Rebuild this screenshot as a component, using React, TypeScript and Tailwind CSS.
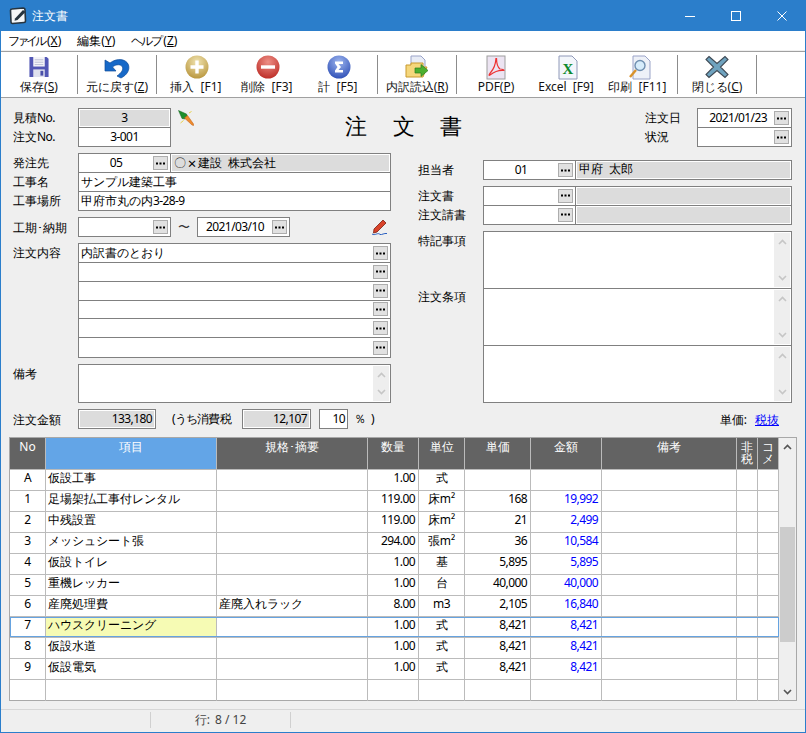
import React from "react";

const FONT = "font-['Noto_Sans_CJK_JP','Noto_Sans',sans-serif]";

function Dots() {
  return (
    <span className="flex h-[14px] w-[15px] shrink-0 items-center justify-center border border-[#adadad] bg-[#e1e1e1]">
      <svg width="9" height="3" viewBox="0 0 9 3"><rect width="2" height="2" y="0.5" fill="#000" /><rect x="3.5" y="0.5" width="2" height="2" fill="#000" /><rect x="7" y="0.5" width="2" height="2" fill="#000" /></svg>
    </span>
  );
}

function Num({ children, className = "" }: { children: React.ReactNode; className?: string }) {
  return <span className={`tracking-[-0.6px] ${className}`}>{children}</span>;
}

function Label({ children, className = "" }: { children: React.ReactNode; className?: string }) {
  return <div className={`w-[65px] shrink-0 text-[12px] leading-[19px] text-black ${className}`}>{children}</div>;
}

function GreyFill({ children, className = "" }: { children?: React.ReactNode; className?: string }) {
  return <div className={`m-[1px] flex min-w-0 flex-1 bg-[#dcdcdc] text-[12px] ${className}`}>{children}</div>;
}

function VScroll({ cls = "" }: { cls?: string }) {
  return (
    <div className={`my-[1px] mr-[1px] flex w-[16px] shrink-0 flex-col items-center justify-between bg-[#eeeeee] py-[6px] ${cls}`}>
      <svg width="9" height="6" viewBox="0 0 9 6"><path d="M1 5 L4.5 1.5 L8 5" fill="none" stroke="#c6c6c6" strokeWidth="1.6" /></svg>
      <svg width="9" height="6" viewBox="0 0 9 6"><path d="M1 1 L4.5 4.5 L8 1" fill="none" stroke="#c6c6c6" strokeWidth="1.6" /></svg>
    </div>
  );
}

function Toolbtn({ w, label, children }: { w: string; label: React.ReactNode; children: React.ReactNode }) {
  return (
    <div className={`flex ${w} shrink-0 flex-col items-center`}>
      <div className="flex h-[30px] w-[28px] items-center justify-center">{children}</div>
      <div className="mt-[-3px] whitespace-nowrap text-[12px] leading-[16px] text-[#111]">{label}</div>
    </div>
  );
}

function Sep() {
  return <div className="my-[3px] w-[1px] shrink-0 bg-[#8c8c8c]" />;
}

function Ball({ id, a, b, children }: { id: string; a: string; b: string; children: React.ReactNode }) {
  return (
    <svg width="24" height="24" viewBox="0 0 24 24">
      <defs>
        <radialGradient id={id} cx="50%" cy="28%" r="75%">
          <stop offset="0%" stopColor={a} />
          <stop offset="100%" stopColor={b} />
        </radialGradient>
      </defs>
      <circle cx="12" cy="12" r="11.5" fill={`url(#${id})`} />
      {children}
    </svg>
  );
}

const U = ({ children }: { children: React.ReactNode }) => <span className="underline">{children}</span>;

const cols = [
  "w-[36px]", "w-[171px]", "w-[151px]", "w-[51px]", "w-[46px]", "w-[66px]", "w-[71px]", "w-[135px]", "w-[21px]", "w-[21px]",
];

type Row = { no: string; name: string; spec?: string; qty: string; unit: string; price?: string; amt?: string };
const rows: Row[] = [
  { no: "A", name: "仮設工事", qty: "1.00", unit: "式" },
  { no: "1", name: "足場架払工事付レンタル", qty: "119.00", unit: "床m²", price: "168", amt: "19,992" },
  { no: "2", name: "中残設置", qty: "119.00", unit: "床m²", price: "21", amt: "2,499" },
  { no: "3", name: "メッシュシート張", qty: "294.00", unit: "張m²", price: "36", amt: "10,584" },
  { no: "4", name: "仮設トイレ", qty: "1.00", unit: "基", price: "5,895", amt: "5,895" },
  { no: "5", name: "重機レッカー", qty: "1.00", unit: "台", price: "40,000", amt: "40,000" },
  { no: "6", name: "産廃処理費", spec: "産廃入れラック", qty: "8.00", unit: "m3", price: "2,105", amt: "16,840" },
  { no: "7", name: "ハウスクリーニング", qty: "1.00", unit: "式", price: "8,421", amt: "8,421" },
  { no: "8", name: "仮設水道", qty: "1.00", unit: "式", price: "8,421", amt: "8,421" },
  { no: "9", name: "仮設電気", qty: "1.00", unit: "式", price: "8,421", amt: "8,421" },
  { no: "", name: "", qty: "", unit: "" },
];

const heads = ["No", "項目", "規格･摘要", "数量", "単位", "単価", "金額", "備考", "非税", "コメ"];

export default function App() {
  return (
    <div className={`flex h-[733px] w-[806px] flex-col overflow-hidden border-x border-b border-[#2b7ecb] bg-[#efefef] text-black ${FONT}`}>
      {/* title bar */}
      <div className="flex h-[31px] shrink-0 items-center bg-[#2b7ecb] pl-[8px] text-white">
        <svg width="19" height="18" viewBox="0 0 19 18">
          <path d="M1.5 3.5 Q1.5 2 3 2 L14 1 Q16 1 16 3 L16.5 14 Q16.5 15.5 15 15.5 L3.5 16.5 Q2 16.5 2 15 Z" fill="#f4f6f8" stroke="#26343f" strokeWidth="1.6" />
          <path d="M6 11.5 L14 3 L16.5 5 L8.5 13 L5.5 13.8 Z" fill="#26343f" />
        </svg>
        <span className="ml-[4px] text-[12px]">注文書</span>
        <div className="flex-1" />
        <svg width="12" height="12" viewBox="0 0 12 12" className="mr-[34px]"><path d="M1 6.5 H11" stroke="#fff" /></svg>
        <svg width="12" height="12" viewBox="0 0 12 12" className="mr-[34px]"><rect x="1.5" y="1.5" width="9" height="9" fill="none" stroke="#fff" /></svg>
        <svg width="12" height="12" viewBox="0 0 12 12" className="mr-[17px]"><path d="M1.5 1.5 L10.5 10.5 M10.5 1.5 L1.5 10.5" stroke="#fff" /></svg>
      </div>
      {/* menu */}
      <div className="flex h-[19px] shrink-0 items-center gap-[16px] bg-white pl-[7px] text-[12px]">
        <span><span className="tracking-[-3px]">ファイル</span><span className="ml-[3px]">(<U>X</U>)</span></span>
        <span>編集(<U>Y</U>)</span>
        <span><span className="tracking-[-2px]">ヘルプ</span><span className="ml-[2px]">(<U>Z</U>)</span></span>
      </div>
      <div className="h-[1px] shrink-0 bg-[#efefef]" />
      {/* toolbar */}
      <div className="flex h-[47px] shrink-0 border-y border-[#a0a0a0] bg-white">
        <Toolbtn w="w-[76px]" label={<>保存(<U>S</U>)</>}>
          <svg width="22" height="22" viewBox="0 0 22 23">
            <path d="M1 1 H19 L21 3 V22 H1 Z" fill="#5257b5" />
            <rect x="5" y="1" width="12" height="10" fill="#f4f4f8" />
            <path d="M6.5 4 H15.5 M6.5 6.5 H15.5 M6.5 9 H15.5" stroke="#b9bcd4" />
            <rect x="5" y="14" width="12" height="8" fill="#dfe1ee" />
            <rect x="12.5" y="15.5" width="3" height="5" fill="#4a4fa8" />
          </svg>
        </Toolbtn>
        <Sep />
        <Toolbtn w="w-[78px]" label={<>元に戻す(<U>Z</U>)</>}>
          <svg width="26" height="23" viewBox="0 0 26 23">
            <path d="M1 4 L1 15 L12 15 L8.5 11 C12 8 17 8 18.5 11 C19.5 14 17 17 13 20 L17 22 C23 19 26 14 24.5 9 C22.5 3 13 1.5 6 7 Z" fill="#1769c8" stroke="#0e4a98" strokeWidth="0.7" />
          </svg>
        </Toolbtn>
        <Sep />
        <div className="w-[4px] shrink-0" />
        <Toolbtn w="w-[71px]" label={<span className="mr-[2px] block">挿入<span className="ml-[7px]">[F1]</span></span>}>
          <Ball id="g1" a="#f0e3b0" b="#b8953c"><path d="M12 5.5 V18.5 M5.5 12 H18.5" stroke="#fff" strokeWidth="3.4" /></Ball>
        </Toolbtn>
        <Toolbtn w="w-[71px]" label={<span className="mr-[2px] block">削除<span className="ml-[7px]">[F3]</span></span>}>
          <Ball id="g2" a="#ee8f86" b="#bc2b25"><path d="M5 12 H19" stroke="#fff" strokeWidth="3.4" /></Ball>
        </Toolbtn>
        <Toolbtn w="w-[71px]" label={<span className="mr-[2px] block">計<span className="ml-[7px]">[F5]</span></span>}>
          <Ball id="g3" a="#9db5ee" b="#2e4fb6"><path d="M8 6.5 H16 V9 L11.5 9 L14 12 L11.5 15 L16 15 V17.5 H8 V15.5 L10.5 12 L8 8.5 Z" fill="#fff" /></Ball>
        </Toolbtn>
        <div className="w-[3px] shrink-0" />
        <Sep />
        <Toolbtn w="w-[78px]" label={<>内訳読込(<U>R</U>)</>}>
          <svg width="24" height="25" viewBox="0 0 24 25">
            <path d="M6 1 H16 L20 5 V14 H6 Z" fill="#e8ecf6" stroke="#9aa3c8" />
            <path d="M1 10 H6 V8 H18 V12 L22 12 L18 22 H1 Z" fill="#f5d77c" stroke="#c99a2e" />
            <path d="M10 13 H16 V9.5 L23 15.5 L16 21.5 V18 H10 Z" fill="#4caf2f" stroke="#2b7c1e" strokeWidth="0.7" />
          </svg>
        </Toolbtn>
        <Sep />
        <div className="w-[3px] shrink-0" />
        <Toolbtn w="w-[72px]" label={<>PDF(<U>P</U>)</>}>
          <svg width="20" height="25" viewBox="0 0 20 25">
            <rect x="1" y="1" width="18" height="23" fill="#ece4f2" stroke="#9e9e9e" />
            <path d="M10 3 C9.5 7 10 11 5 17 C3 19.5 2.5 21 4 20 C8 17 12 15 17.5 15.5 C19 15.7 17 14 14 14 C11.5 12 10.5 8 10.5 3" fill="none" stroke="#ee3232" strokeWidth="1.2" />
          </svg>
        </Toolbtn>
        <Toolbtn w="w-[72px]" label={<span className="mr-[4px] block">Excel<span className="ml-[6px]">[F9]</span></span>}>
          <svg width="20" height="25" viewBox="0 0 20 25">
            <path d="M1 1 H14 L19 6 V24 H1 Z" fill="#f3f6fb" stroke="#8f98b8" />
            <text x="10" y="19" textAnchor="middle" fontFamily="Liberation Serif" fontWeight="bold" fontSize="15" fill="#0c8a2c">X</text>
          </svg>
        </Toolbtn>
        <Toolbtn w="w-[72px]" label={<span className="mr-[6px] block">印刷<span className="ml-[7px]">[F11]</span></span>}>
          <svg width="24" height="25" viewBox="0 0 24 25">
            <path d="M5 1 H17 L22 6 V24 H5 Z" fill="#eef1f8" stroke="#9aa3c8" />
            <path d="M8 15 L2 22" stroke="#d9922a" strokeWidth="2.4" />
            <circle cx="12" cy="10.5" r="5" fill="#d6ecfb" stroke="#6f8fb0" strokeWidth="1.4" />
          </svg>
        </Toolbtn>
        <div className="w-[1px] shrink-0" />
        <Sep />
        <Toolbtn w="w-[78px]" label={<>閉じる(<U>C</U>)</>}>
          <svg width="24" height="24" viewBox="0 0 24 24">
            <path d="M4 1.5 L12 8.5 L20 1.5 L23 4.5 L15.5 12 L23 19.5 L20 22.5 L12 15.5 L4 22.5 L1 19.5 L8.5 12 L1 4.5 Z" fill="#6fa3bf" stroke="#3f4a55" strokeWidth="1.1" />
          </svg>
        </Toolbtn>
        <Sep />
      </div>

      {/* form */}
      <div className="flex min-h-0 flex-1 flex-col pl-[12px] pr-[13px] pt-[10px]">
        {/* header row */}
        <div className="flex h-[39px] shrink-0">
          <div className="flex w-[65px] shrink-0 flex-col">
            <Label>見積<Num>No.</Num></Label>
            <Label>注文<Num>No.</Num></Label>
          </div>
          <div className="flex w-[93px] shrink-0 flex-col border border-[#808080] bg-white text-[12px]">
            <div className="flex h-[19px] border-b border-[#808080]"><GreyFill className="items-center justify-center"><Num>3</Num></GreyFill></div>
            <div className="flex flex-1 items-center justify-center"><Num>3-001</Num></div>
          </div>
          <div className="ml-[7px] mt-[2px] h-[16px] w-[16px] shrink-0">
            <svg width="16" height="16" viewBox="0 0 16 16">
              <path d="M0.5 0.5 L8.5 4 L9.5 7 L7 9 L4 8.5 Z" fill="#1f8f2c" stroke="#0f5f1a" strokeWidth="0.5" />
              <path d="M6.5 8 L9.5 5.5 L15.5 14 L15.5 15.5 L14 15 Z" fill="#ee8b2d" stroke="#c8651a" strokeWidth="0.6" />
              <path d="M2.5 13 L5.5 10.5 M11 3 L13.5 1.5" stroke="#e8d24a" />
            </svg>
          </div>
          <div className="flex-1 whitespace-pre pl-[151px] pt-[1px] text-[22px] font-medium leading-[32px] tracking-[1.75px]">注　文　書</div>
          <div className="flex w-[52px] shrink-0 flex-col">
            <div className="text-[12px] leading-[19px]">注文日</div>
            <div className="text-[12px] leading-[19px]">状況</div>
          </div>
          <div className="flex w-[95px] shrink-0 flex-col border border-[#808080] bg-white text-[12px]">
            <div className="flex h-[19px] items-center border-b border-[#808080] pr-[2px]"><div className="flex-1 pr-[7px] text-right"><Num>2021/01/23</Num></div><Dots /></div>
            <div className="flex flex-1 items-center justify-end pr-[2px]"><Dots /></div>
          </div>
        </div>

        {/* two columns */}
        <div className="mt-[6px] flex h-[276px] shrink-0">
          {/* left */}
          <div className="flex w-[378px] shrink-0 flex-col">
            <div className="flex">
              <div className="flex w-[65px] shrink-0 flex-col">
                <Label>発注先</Label><Label>工事名</Label><Label>工事場所</Label>
              </div>
              <div className="flex h-[58px] w-[313px] flex-col border border-[#808080] bg-white text-[12px]">
                <div className="flex h-[19px] border-b border-[#808080]">
                  <div className="flex w-[92px] shrink-0 items-center border-r border-[#808080] pr-[2px]"><div className="flex-1 text-center"><Num>05</Num></div><Dots /></div>
                  <GreyFill className="items-center pl-[2px]">〇<span className="inline-block w-[12px] text-center text-[15px] leading-[14px]">×</span>建設&nbsp;&nbsp;株式会社</GreyFill>
                </div>
                <div className="flex h-[19px] items-center border-b border-[#808080] pl-[2px]">サンプル建築工事</div>
                <div className="flex flex-1 items-center pl-[2px]">甲府市丸の内<Num>3-28-9</Num></div>
              </div>
            </div>
            <div className="mt-[6px] flex h-[20px] items-center text-[12px]">
              <Label>工期･納期</Label>
              <div className="flex h-[20px] w-[93px] items-center justify-end border border-[#808080] bg-white pr-[2px]"><Dots /></div>
              <span className="w-[26px] text-center text-[#333]">〜</span>
              <div className="flex h-[20px] w-[93px] items-center border border-[#808080] bg-white pr-[2px]"><div className="flex-1 text-center"><Num>2021/03/10</Num></div><Dots /></div>
              <div className="ml-[81px]">
                <svg width="16" height="17" viewBox="0 0 16 17">
                  <path d="M3 10 L12 1 L15 4 L6 13 L2.5 14 Z" fill="#d9432a" stroke="#7a1f12" strokeWidth="0.8" />
                  <path d="M1 15 C4 17 7 13 9 15.5 C11 16 13 14 16 14.5" fill="none" stroke="#2a5fc0" />
                </svg>
              </div>
            </div>
            <div className="mt-[6px] flex">
              <Label>注文内容</Label>
              <div className="flex h-[115px] w-[313px] flex-col border border-[#808080] bg-white text-[12px]">
                {["内訳書のとおり", "", "", "", "", ""].map((t, i) => (
                  <div key={i} className={`flex h-[19px] items-center pl-[2px] pr-[2px] ${i < 5 ? "border-b border-[#808080]" : ""}`}>
                    <div className="flex-1">{t}</div>
                    <Dots />
                  </div>
                ))}
              </div>
            </div>
            <div className="mt-[6px] flex">
              <Label>備考</Label>
              <div className="flex h-[39px] w-[313px] justify-end border border-[#808080] bg-white"><VScroll cls="py-[5px]" /></div>
            </div>
            <div className="mt-[6px] flex h-[20px] items-center text-[12px]">
              <Label>注文金額</Label>
              <div className="flex h-[20px] w-[78px] border border-[#808080] bg-white"><GreyFill className="items-center justify-end pr-[2px]"><Num>133,180</Num></GreyFill></div>
              <span className="ml-[16px] w-[70px] whitespace-nowrap tracking-[-0.8px]">(うち消費税</span>
              <div className="flex h-[20px] w-[69px] border border-[#808080] bg-white"><GreyFill className="items-center justify-end pr-[2px]"><Num>12,107</Num></GreyFill></div>
              <div className="ml-[8px] flex h-[20px] w-[29px] items-center justify-end border border-[#808080] bg-white pr-[2px]"><Num>10</Num></div>
              <span className="ml-[6px]">％</span>
              <span className="ml-[5px]">)</span>
            </div>
          </div>
          {/* right */}
          <div className="ml-[27px] flex min-w-0 flex-1 flex-col pt-[7px]">
            <div className="flex">
              <Label>担当者</Label>
              <div className="flex h-[20px] w-[310px] border border-[#808080] bg-white text-[12px]">
                <div className="flex w-[92px] shrink-0 items-center border-r border-[#808080] pr-[2px]"><div className="flex-1 text-center"><Num>01</Num></div><Dots /></div>
                <GreyFill className="items-start pl-[2px] leading-[14px]">甲府&nbsp;&nbsp;太郎</GreyFill>
              </div>
            </div>
            <div className="mt-[6px] flex">
              <div className="flex w-[65px] shrink-0 flex-col"><Label>注文書</Label><Label>注文請書</Label></div>
              <div className="flex h-[39px] w-[310px] flex-col border border-[#808080] bg-white">
                {[0, 1].map((i) => (
                  <div key={i} className={`flex h-[19px] ${i === 0 ? "border-b border-[#808080]" : ""}`}>
                    <div className="flex w-[92px] shrink-0 items-center justify-end border-r border-[#808080] pr-[2px]"><Dots /></div>
                    <GreyFill />
                  </div>
                ))}
              </div>
            </div>
            <div className="mt-[6px] flex">
              <div className="flex w-[65px] shrink-0 flex-col">
                <Label className="h-[56px]">特記事項</Label>
                <Label>注文条項</Label>
              </div>
              <div className="flex h-[172px] w-[310px] flex-col border border-[#808080] bg-white">
                <div className="flex h-[57px] justify-end border-b border-[#808080]"><VScroll /></div>
                <div className="flex h-[57px] justify-end border-b border-[#808080]"><VScroll /></div>
                <div className="flex flex-1 justify-end"><VScroll /></div>
              </div>
            </div>
            <div className="mt-[8px] flex justify-end pr-[13px] text-[12px] leading-[18px]">
              <span>単価:</span><a className="ml-[8px] text-[#0000ff] underline">税抜</a>
            </div>
          </div>
        </div>

        {/* table */}
        <div className="ml-[-4px] mr-[-5px] mt-[8px] flex h-[264px] shrink-0 border border-[#a8a8a8] bg-white">
          <div className="flex min-w-0 flex-1 flex-col">
            <div className="flex h-[32px] shrink-0 border-b border-[#bbbbbb]">
              {heads.map((h, i) => (
                <div
                  key={h}
                  className={`${cols[i]} shrink-0 border-r border-[#bbbbbb] text-center text-[12px] text-white ${i === 1 ? "bg-[#63a5e7]" : "bg-[#636363]"} ${i >= 8 ? "px-[3px] pt-[3px] leading-[12px] [word-break:break-all]" : "leading-[17px]"}`}
                >
                  {h}
                </div>
              ))}
            </div>
            {rows.map((r, idx) => {
              const sel = r.no === "7";
              const vals: React.ReactNode[] = [
                <Num>{r.no}</Num>,
                r.name,
                r.spec ?? "",
                <Num>{r.qty}</Num>,
                /^[a-z]/.test(r.unit) ? <Num>{r.unit}</Num> : r.unit,
                <Num>{r.price}</Num>,
                <Num className="text-[#0000ff]">{r.amt}</Num>,
                "", "", "",
              ];
              return (
                <div key={idx} className={`relative flex h-[21px] shrink-0 ${idx < 10 ? "border-b border-[#bbbbbb]" : ""}`}>
                  {vals.map((v, i) => (
                    <div
                      key={i}
                      className={`${cols[i]} flex shrink-0 items-center overflow-hidden whitespace-nowrap border-r border-[#bbbbbb] pb-[5px] text-[12px] ${i === 0 || i === 4 ? "justify-center" : ""} ${i === 1 || i === 2 ? "pl-[2px]" : ""} ${i === 3 || i === 5 || i === 6 ? "justify-end pr-[3px]" : ""} ${sel && i === 1 ? "bg-[#f6fbb4]" : ""}`}
                    >
                      {v}
                    </div>
                  ))}
                  {sel && <div className="pointer-events-none absolute inset-0 border border-[#66a3e0]" />}
                </div>
              );
            })}
          </div>
          <div className="flex w-[17px] shrink-0 flex-col items-center bg-[#efefef]">
            <div className="flex h-[17px] shrink-0 items-center">
              <svg width="9" height="6" viewBox="0 0 9 6"><path d="M1 5 L4.5 1.5 L8 5" fill="none" stroke="#555" strokeWidth="1.6" /></svg>
            </div>
            <div className="h-[72px] shrink-0" />
            <div className="h-[115px] w-[15px] shrink-0 bg-[#cccccc]" />
            <div className="flex-1" />
            <div className="flex h-[17px] shrink-0 items-center">
              <svg width="9" height="6" viewBox="0 0 9 6"><path d="M1 1 L4.5 4.5 L8 1" fill="none" stroke="#555" strokeWidth="1.6" /></svg>
            </div>
          </div>
        </div>
      </div>

      {/* status bar */}
      <div className="flex h-[23px] shrink-0 items-start border-t border-[#d6d6d6] pt-[2px] text-[12px] text-[#444]">
        <div className="h-[16px] w-[150px] border-r border-[#d0d0d0]" />
        <div className="flex h-[16px] w-[140px] items-center justify-center border-r border-[#d0d0d0] pb-[1px]">行: <span className="ml-[5px]">8 / 12</span></div>
      </div>
    </div>
  );
}
